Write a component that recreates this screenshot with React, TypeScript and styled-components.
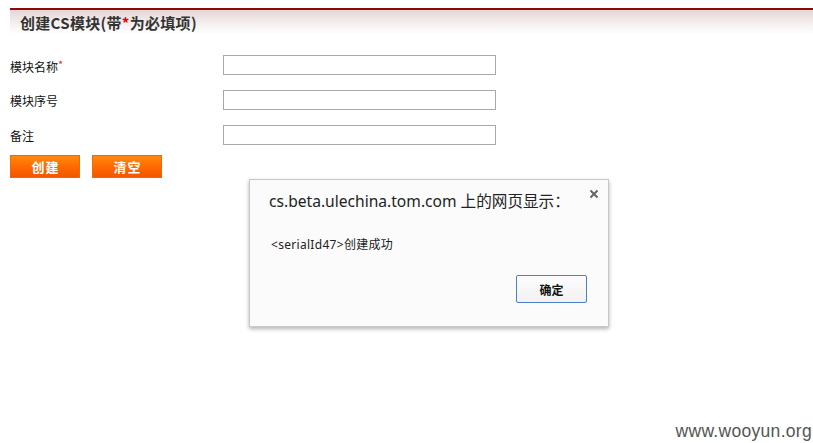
import React from "react";
import styled, { createGlobalStyle } from "styled-components";

const Global = createGlobalStyle`
  html, body { margin: 0; padding: 0; background: #fff; }
  body { width: 813px; height: 443px; overflow: hidden; position: relative;
    font-family: "Noto Sans CJK SC", "Noto Sans", sans-serif; color: #222; }
`;

const Page = styled.div`
  position: relative;
  width: 813px;
  height: 443px;
  padding-top: 8px;
  box-sizing: border-box;
`;

const Header = styled.div`
  margin-left: 10px;
  height: 24px;
  border-top: 2px solid #8a0a0a;
  background: linear-gradient(to bottom, #e6d6d6 0%, #f4eeee 55%, #ffffff 100%);
  display: flex;
  align-items: center;
  padding-left: 10px;
`;

const Title = styled.h1`
  margin: 0;
  font-size: 15px;
  font-weight: bold;
  color: #333;
  font-family: "Noto Sans CJK SC", sans-serif;
  letter-spacing: 0.3px;
`;

const Star = styled.span`
  color: #e00;
`;

const Form = styled.div`
  margin-top: 21px;
  padding-left: 10px;
  display: flex;
  flex-direction: column;
  gap: 15px;
`;

const Row = styled.div`
  display: flex;
  align-items: center;
  height: 20px;
`;

const Label = styled.label`
  width: 213px;
  font-size: 12px;
  color: #111;
`;

const SmallStar = styled.span`
  color: #d33;
  font-size: 11px;
  vertical-align: 3px;
`;

const Input = styled.input`
  width: 273px;
  height: 20px;
  box-sizing: border-box;
  border: 1px solid #a9a9a9;
  margin: 0;
  padding: 0 2px;
  font-size: 12px;
`;

const Buttons = styled.div`
  display: flex;
  gap: 12px;
  margin-top: -5px;
`;

const OrangeButton = styled.button`
  width: 70px;
  height: 23px;
  box-sizing: border-box;
  border: 1px solid #f06a00;
  background: linear-gradient(to bottom, #ff8a10 0%, #ff6a00 50%, #f25500 100%);
  color: #fff;
  font-weight: bold;
  font-size: 13px;
  letter-spacing: 1px;
  padding: 0 0 0 1px;
  font-family: "Noto Sans CJK SC", sans-serif;
`;

const Dialog = styled.div`
  position: absolute;
  left: 249px;
  top: 179px;
  width: 360px;
  height: 148px;
  box-sizing: border-box;
  background: #fbfbfb;
  border: 1px solid #c8c8c8;
  box-shadow: 0 2px 4px rgba(0, 0, 0, 0.3);
  padding: 11px 21px 0 19px;
  display: flex;
  flex-direction: column;
`;

const DialogTitle = styled.div`
  font-size: 15.6px;
  color: #222;
  font-family: "Noto Sans", "Noto Sans CJK SC", sans-serif;
  line-height: 20px;
`;

const Close = styled.div`
  position: absolute;
  right: 8px;
  top: 8px;
  width: 12px;
  height: 12px;
  display: flex;
  align-items: center;
  justify-content: center;
`;

const Message = styled.div`
  margin-top: 24px;
  margin-left: 2px;
  font-size: 12px;
  color: #222;
  letter-spacing: 0.3px;
  font-family: "Noto Sans", "Noto Sans CJK SC", sans-serif;
`;

const DialogFooter = styled.div`
  display: flex;
  justify-content: flex-end;
  margin-top: 22px;
`;

const OkButton = styled.button`
  width: 71px;
  height: 28px;
  box-sizing: border-box;
  border: 1px solid #4d7fc9;
  border-radius: 2px;
  background: linear-gradient(to bottom, #fdfdfd, #f1f1f1);
  font-weight: bold;
  font-size: 12px;
  color: #111;
  padding: 0;
  font-family: "Noto Sans CJK SC", sans-serif;
`;

const Watermark = styled.div`
  position: absolute;
  right: 1px;
  bottom: 1px;
  font-size: 17.5px;
  color: #555;
  font-family: "Liberation Sans", Arial, sans-serif;
  letter-spacing: 0.3px;
`;

export default function App() {
  return (
    <Page>
      <Global />
      <Header>
        <Title>
          创建CS模块(带<Star>*</Star>为必填项)
        </Title>
      </Header>
      <Form>
        <Row>
          <Label>
            模块名称<SmallStar>*</SmallStar>
          </Label>
          <Input />
        </Row>
        <Row>
          <Label>模块序号</Label>
          <Input />
        </Row>
        <Row>
          <Label>备注</Label>
          <Input />
        </Row>
        <Buttons>
          <OrangeButton>创建</OrangeButton>
          <OrangeButton>清空</OrangeButton>
        </Buttons>
      </Form>
      <Dialog>
        <Close>
          <svg width="10" height="10" viewBox="0 0 10 10">
            <path d="M1.5 1.5 L8.5 8.5 M8.5 1.5 L1.5 8.5" stroke="#666" strokeWidth="2" />
          </svg>
        </Close>
        <DialogTitle>cs.beta.ulechina.tom.com 上的网页显示：</DialogTitle>
        <Message>&lt;serialId47&gt;创建成功</Message>
        <DialogFooter>
          <OkButton>确定</OkButton>
        </DialogFooter>
      </Dialog>
      <Watermark>www.wooyun.org</Watermark>
    </Page>
  );
}
